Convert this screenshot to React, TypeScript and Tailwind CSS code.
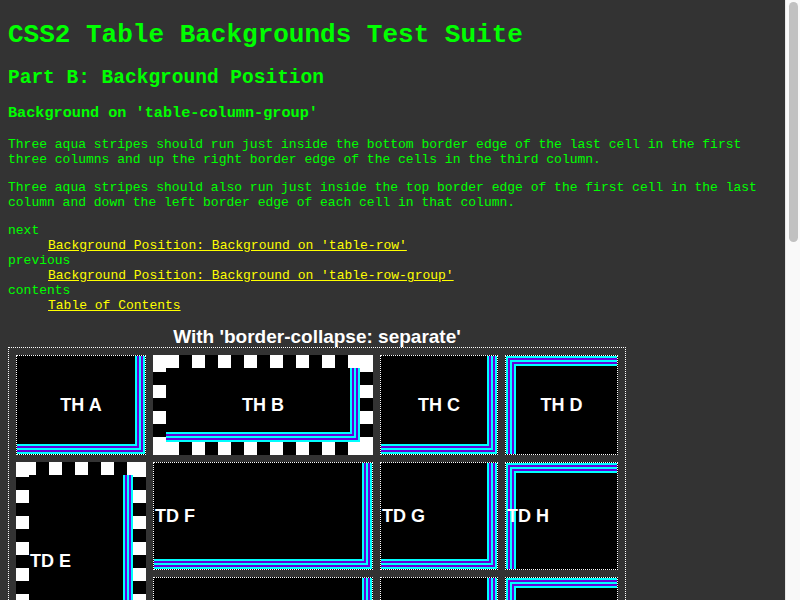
import React from "react";

// aqua / violet stripe corner, painted inside the padding box
const BR =
  "shadow-[inset_-2px_-2px_0_#00ffff,inset_-4px_-4px_0_#6400dc,inset_-6px_-6px_0_#00ffff,inset_-8px_-8px_0_#6400dc,inset_-10px_-10px_0_#00ffff]";
const TL =
  "shadow-[inset_2px_2px_0_#00ffff,inset_4px_4px_0_#6400dc,inset_6px_6px_0_#00ffff,inset_8px_8px_0_#6400dc,inset_10px_10px_0_#00ffff]";

// 13px white/black dashed frame, drawn as backgrounds so the dashes are square
const DASH_THB =
  "[background:linear-gradient(#fff,#fff)_left_top/13px_13px_no-repeat,linear-gradient(#fff,#fff)_right_top/13px_13px_no-repeat,linear-gradient(#fff,#fff)_left_bottom/13px_13px_no-repeat,linear-gradient(#fff,#fff)_right_bottom/13px_13px_no-repeat,linear-gradient(90deg,#fff_13px,#000_13px)_13px_top/26px_13px_repeat-x,linear-gradient(90deg,#fff_13px,#000_13px)_13px_bottom/26px_13px_repeat-x,linear-gradient(#fff_13px,#000_13px)_left_4px/13px_26px_repeat-y,linear-gradient(#fff_13px,#000_13px)_right_4px/13px_26px_repeat-y,#000]";
const DASH_TDE =
  "[background:linear-gradient(#fff,#fff)_left_top/13px_13px_no-repeat,linear-gradient(#fff,#fff)_right_top/13px_13px_no-repeat,linear-gradient(#fff,#fff)_left_bottom/13px_13px_no-repeat,linear-gradient(#fff,#fff)_right_bottom/13px_13px_no-repeat,linear-gradient(90deg,#fff_13px,#000_13px)_7px_top/26px_13px_repeat-x,linear-gradient(90deg,#fff_13px,#000_13px)_7px_bottom/26px_13px_repeat-x,linear-gradient(#fff_13px,#000_13px)_left_2px/13px_26px_repeat-y,linear-gradient(#fff_13px,#000_13px)_right_2px/13px_26px_repeat-y,#000]";

const cellText =
  "p-px text-[18px] leading-[21px] font-bold text-white font-['Liberation_Sans',Arial,sans-serif]";

type CellProps = {
  label: string;
  head?: boolean;
  corner: "br" | "tl";
};

function Cell({ label, head, corner }: CellProps) {
  return (
    <div
      className={[
        "flex items-center bg-black border border-dotted border-white",
        cellText,
        head ? "justify-center" : "justify-start",
        corner === "br" ? BR : TL,
      ].join(" ")}
    >
      {label}
    </div>
  );
}

function ThickCell({ label, head, frame, span }: { label: string; head?: boolean; frame: string; span?: boolean }) {
  return (
    <div className={["flex p-[13px]", frame, span ? "row-span-2" : ""].join(" ")}>
      <div
        className={[
          "flex flex-1 items-center bg-black",
          cellText,
          head ? "justify-center" : "justify-start",
          BR,
        ].join(" ")}
      >
        {label}
      </div>
    </div>
  );
}

function BgTable({ caption }: { caption: string }) {
  return (
    <div className="w-fit">
      <div className="text-center text-[19px] leading-[21px] font-bold text-white font-['Liberation_Sans',Arial,sans-serif]">
        {caption}
      </div>
      <div className="grid grid-cols-[130px_220px_118px_113px] grid-rows-[100px_108px_83px] gap-[7px] p-[7px] border border-dotted border-white">
        <Cell label="TH A" head corner="br" />
        <ThickCell label="TH B" head frame={DASH_THB} />
        <Cell label="TH C" head corner="br" />
        <Cell label="TH D" head corner="tl" />
        <ThickCell label="TD E" frame={DASH_TDE} span />
        <Cell label="TD F" corner="br" />
        <Cell label="TD G" corner="br" />
        <Cell label="TD H" corner="tl" />
        <Cell label="TD I" corner="br" />
        <Cell label="TD J" corner="br" />
        <Cell label="TD K" corner="tl" />
      </div>
    </div>
  );
}

export default function App() {
  return (
    <div className="flex h-screen bg-[#333333]">
      <div className="flex-1 overflow-hidden text-[13px] leading-[15px] text-[#00ff00] font-['Liberation_Mono','Courier_New',monospace]">
        <div className="px-2 pt-[20px] pb-[300px]">
          <h1 className="mb-[17px] text-[26px] leading-[30px] font-bold">CSS2 Table Backgrounds Test Suite</h1>
          <h2 className="mb-[16px] text-[19.5px] leading-[22px] font-bold">Part B: Background Position</h2>
          <h3 className="mb-[15px] text-[15.2px] leading-[17px] font-bold">Background on 'table-column-group'</h3>

          <div className="max-w-[769px]">
            <p className="mb-[13px]">
              Three aqua stripes should run just inside the bottom border edge of the last cell in the first
              three columns and up the right border edge of the cells in the third column.
            </p>
            <p className="mb-[13px]">
              Three aqua stripes should also run just inside the top border edge of the first cell in the last
              column and down the left border edge of each cell in that column.
            </p>
          </div>

          <dl className="mb-[13px]">
            <dt>next</dt>
            <dd className="pl-10">
              <a href="#" className="text-[#ffff00] underline">Background Position: Background on 'table-row'</a>
            </dd>
            <dt>previous</dt>
            <dd className="pl-10">
              <a href="#" className="text-[#ffff00] underline">Background Position: Background on 'table-row-group'</a>
            </dd>
            <dt>contents</dt>
            <dd className="pl-10">
              <a href="#" className="text-[#ffff00] underline">Table of Contents</a>
            </dd>
          </dl>

          <BgTable caption="With 'border-collapse: separate'" />
          <div className="h-[40px]" />
          <BgTable caption="With 'border-collapse: collapse'" />
        </div>
      </div>

      {/* page scrollbar */}
      <div className="w-[15px] shrink-0 border-l border-[#e8e8e8] bg-[#f9f9f9] pt-[2px] pl-[3px] pr-[2px]">
        <div className="h-[240px] w-[9px] rounded-full bg-[#c1c1c1]" />
      </div>
    </div>
  );
}
